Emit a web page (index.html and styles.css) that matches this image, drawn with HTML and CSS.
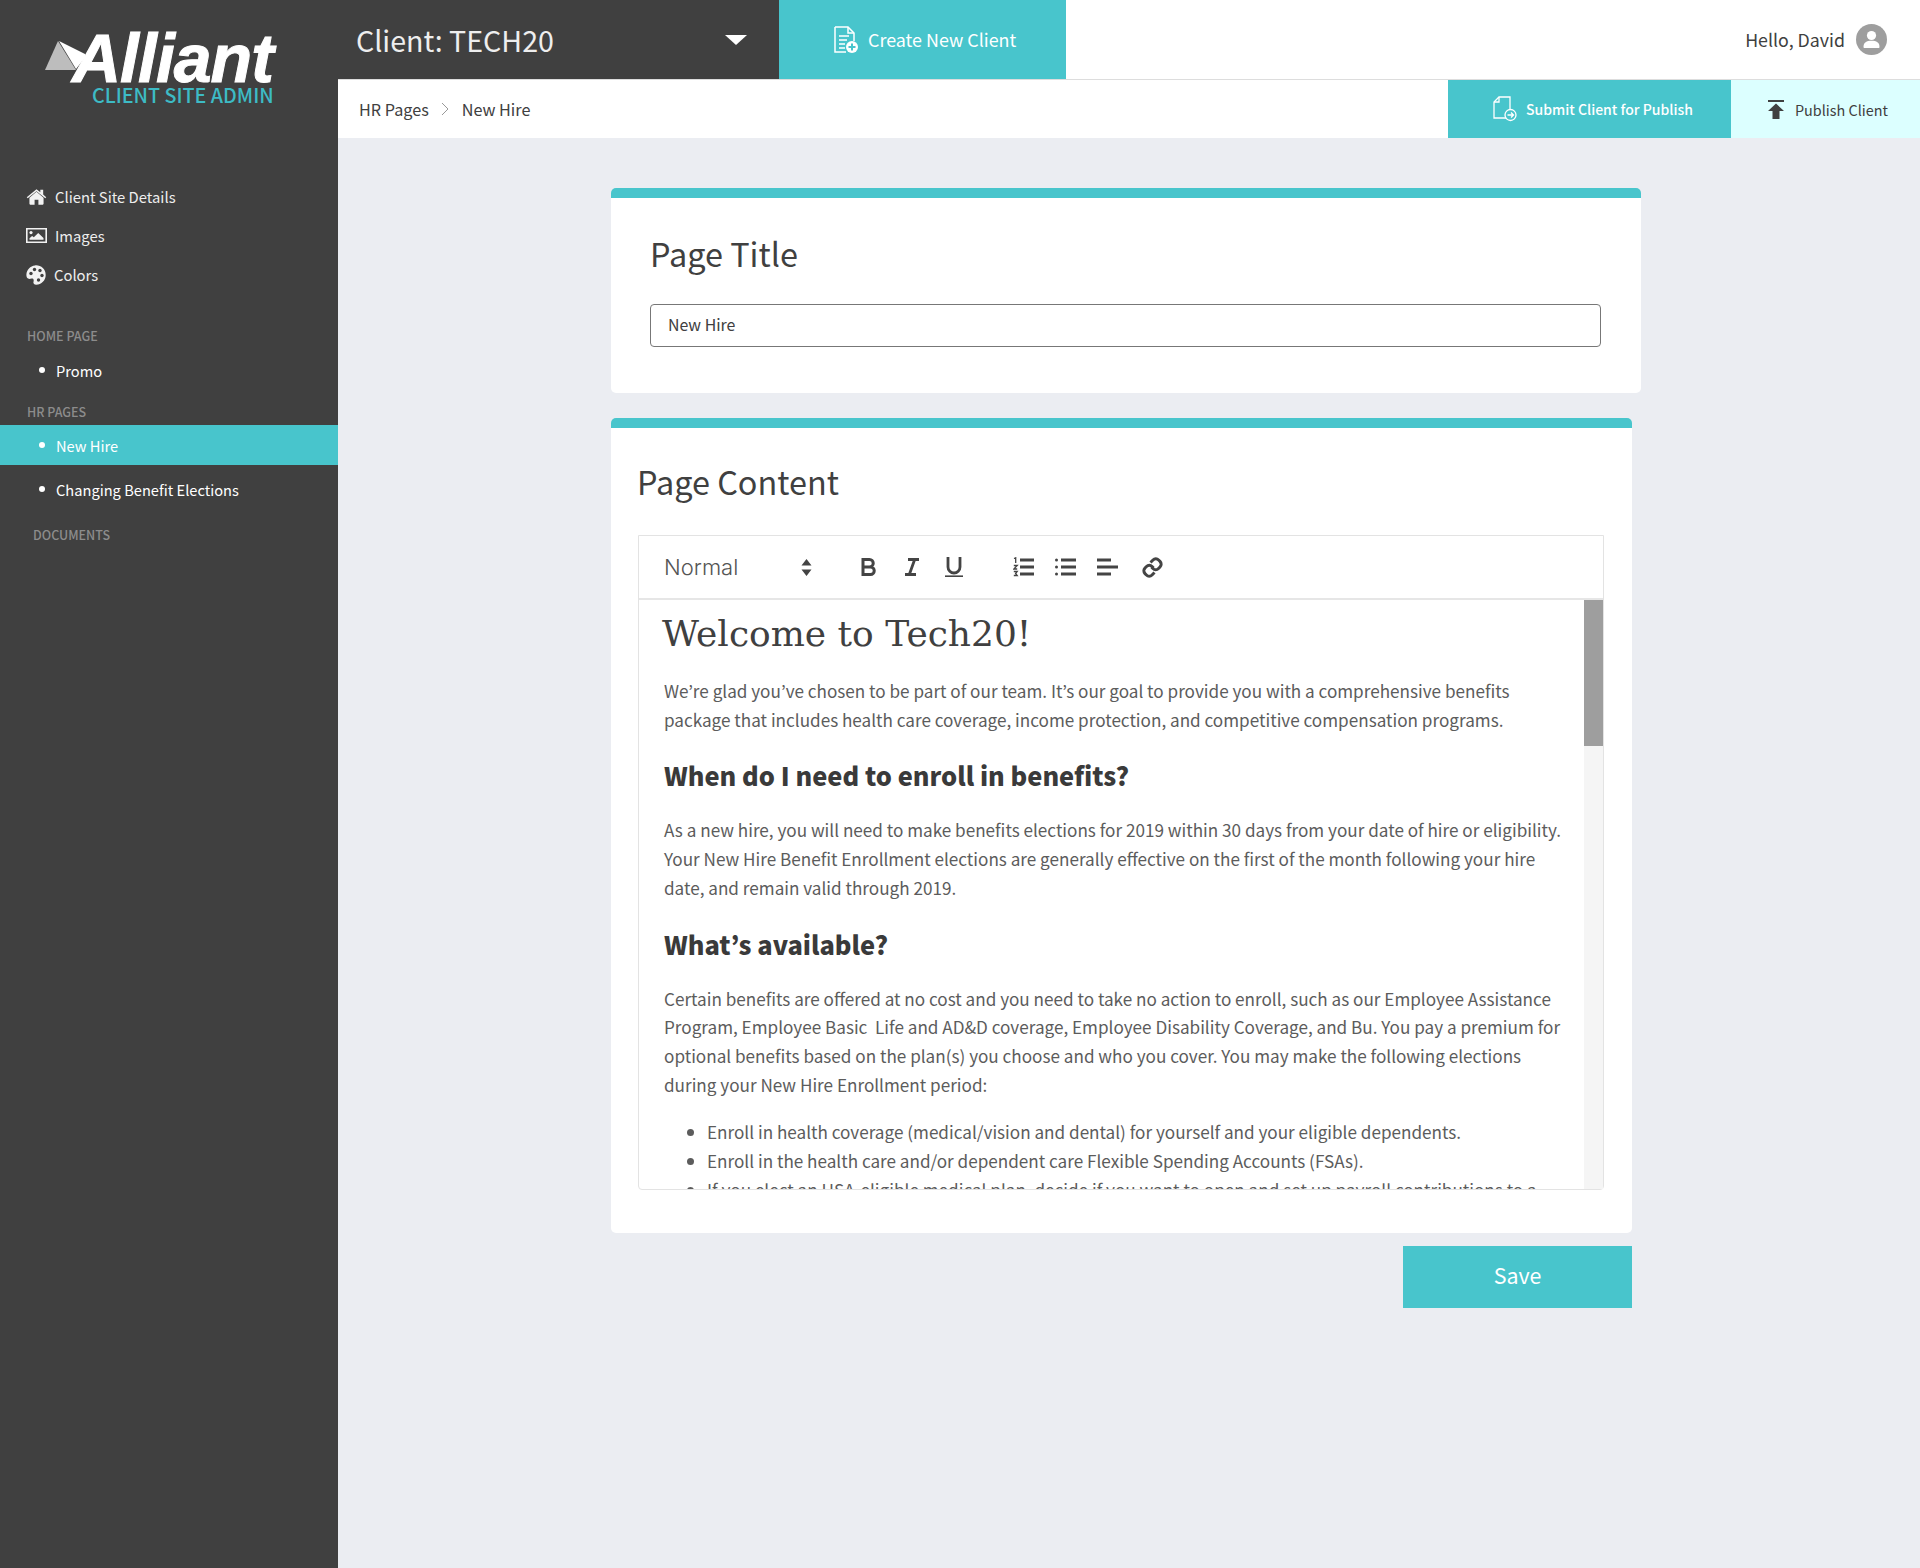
FILE: index.html
```html
<!DOCTYPE html>
<html lang="en">
<head>
<meta charset="utf-8">
<title>Client Site Admin</title>
<link rel="stylesheet" href="styles.css">
</head>
<body>
<div class="app">
  <aside class="sidebar">
    <div class="logo">
      <div class="logo-mark">
        <svg class="logo-tri" viewBox="0 0 40 40" width="40" height="40"><path d="M13 0 L0 29 L31 29 Z" fill="#bdbdbd"/><path d="M14 0 L42 14 L31 28 Z" fill="#fff"/></svg>
        <span class="logo-word">Alliant</span>
      </div>
      <div class="logo-sub">CLIENT SITE ADMIN</div>
    </div>
    <nav class="nav-main">
      <a class="nav-item">
        <svg viewBox="0 0 22 18" width="21" height="18"><path d="M11 3.6 3.6 9.8V16.2a.8.8 0 0 0 .8.8H9v-5h4v5h4.6a.8.8 0 0 0 .8-.8V9.8Z" fill="#f2f2f2"/><path d="M.8 9.2 11 .9l4 3.2V1.5h3v5l3.2 2.7-1 1.2L11 2.9 1.8 10.4Z" fill="#f2f2f2"/></svg>
        <span>Client Site Details</span></a>
      <a class="nav-item">
        <svg viewBox="0 0 21 16" width="21" height="16"><path fill-rule="evenodd" d="M0 0h21v15H0Zm1.6 1.6v11.8h17.8V1.6Z" fill="#f2f2f2"/><circle cx="5" cy="4.6" r="1.6" fill="#f2f2f2"/><path d="M3.5 11.8v-1.5l2.6-2.4 1.7 1.4 4.4-4.3 5.3 5.1v1.7Z" fill="#f2f2f2"/></svg>
        <span>Images</span></a>
      <a class="nav-item">
        <svg viewBox="0 0 20 20" width="20" height="20"><path fill-rule="evenodd" d="M9 .4C14.600-.2 19.700 3.900 19.700 10c0 5.400-4.300 9.700-9.500 9.700-2.300 0-3.100-1.500-2.700-3 .4-1.400.3-2.700-1-3.100-1.500-.5-2.600.6-3.800.2C.9 13.200.3 11.500.4 9.500.7 4.700 4.300.9 9 .4Z" fill="#f2f2f2"/><circle cx="5" cy="8.500" r="1.700" fill="#404040"/><circle cx="8.500" cy="4.500" r="1.700" fill="#404040"/><circle cx="14" cy="5.500" r="1.700" fill="#404040"/><circle cx="16" cy="10.500" r="1.700" fill="#404040"/><circle cx="12.500" cy="15" r="1.700" fill="#404040"/></svg>
        <span>Colors</span></a>
    </nav>
    <div class="nav-head first">HOME PAGE</div>
    <a class="nav-sub promo">Promo</a>
    <div class="nav-head second">HR PAGES</div>
    <a class="nav-sub active">New Hire</a>
    <a class="nav-sub changing">Changing Benefit Elections</a>
    <div class="nav-head docs">DOCUMENTS</div>
  </aside>
  <div class="main">
    <header class="topbar">
      <div class="client-select">
        <span class="client-name">Client: TECH20</span>
        <span class="caret"></span>
      </div>
      <a class="create-btn">
        <svg viewBox="0 0 24 28" width="24" height="28"><path d="M1 1h13l6 6v8M1 1v25h11" fill="none" stroke="#fff" stroke-width="1.500"/><path d="M14 1v6h6M5 10h10M5 14h8M5 18h6M5 22h6" fill="none" stroke="#fff" stroke-width="1.500"/><circle cx="18" cy="21" r="6" fill="#fff"/><path d="M18 17.500v7M14.500 21h7" stroke="#48c5cc" stroke-width="2"/></svg>
        <span class="create-label">Create New Client</span></a>
      <div class="user">
        <span>Hello, David</span>
        <span class="avatar"><svg viewBox="0 0 31 31" width="31" height="31"><circle cx="15.500" cy="11.500" r="4.600" fill="#fff"/><path d="M7.500 23c0-4.500 3-6.200 8-6.200s8 1.700 8 6.200c0 .6-.5 1-1 1h-14c-.5 0-1-.4-1-1Z" fill="#fff"/></svg></span>
      </div>
    </header>
    <div class="subbar">
      <div class="crumbs">
        <span>HR Pages</span>
        <svg viewBox="0 0 8 14" width="8" height="14"><path d="M1 1l6 6-6 6" fill="none" stroke="#999" stroke-width="1"/></svg>
        <span>New Hire</span>
      </div>
      <a class="submit-btn">
        <svg viewBox="0 0 24 26" width="24" height="26"><path d="M13 22H1V6l5-5h11v12" fill="none" stroke="#fff" stroke-width="1.300"/><path d="M1 6h5V1" fill="none" stroke="#fff" stroke-width="1.300"/><circle cx="17.500" cy="19" r="5.500" fill="none" stroke="#fff" stroke-width="1.300"/><path d="M14.500 19h6M18 16.500l2.500 2.500-2.500 2.500" fill="none" stroke="#fff" stroke-width="1.300"/></svg>
        <span>Submit Client for Publish</span></a>
      <a class="publish-btn">
        <svg viewBox="0 0 16 19" width="16" height="19"><path d="M0 0h16v2H0ZM8 3.500 16 11h-4.500v8h-7v-8H0Z" fill="#404040"/></svg>
        <span>Publish Client</span></a>
    </div>
    <main class="content">
      <section class="card card-title">
        <h2 class="card-heading">Page Title</h2>
        <input class="title-input" type="text" value="New Hire">
      </section>
      <section class="card card-content">
        <h2 class="card-heading">Page Content</h2>
        <div class="editor">
          <div class="toolbar">
            <span class="format">Normal</span>
            <svg class="tool-updown" viewBox="0 0 11 17" width="11" height="17"><path d="M5.500 0 10.500 6.500H.5ZM5.500 17 .5 10.500h10Z" fill="#444"/></svg>
            <svg class="tool bold" viewBox="0 0 16 18" width="16" height="18"><path d="M2 1.500h6.500a3.700 3.700 0 0 1 0 7.500H2Zm0 7.500h7.500a3.700 3.700 0 0 1 0 7.500H2Z" fill="none" stroke="#444" stroke-width="3"/></svg>
            <svg class="tool italic" viewBox="0 0 16 18" width="16" height="18"><path d="M4 1.500h11M1 16.500h11M10.500 2 5.500 16" fill="none" stroke="#444" stroke-width="2.800"/></svg>
            <svg class="tool underline" viewBox="0 0 18 20" width="18" height="20"><path d="M3 0v10a6 6 0 0 0 12 0V0" fill="none" stroke="#444" stroke-width="2.800"/><path d="M0 19.200h18" stroke="#444" stroke-width="1.600"/></svg>
            <svg class="tool ol" viewBox="0 0 21 20" width="21" height="20"><path d="M7 3h14M7 10h14M7 17h14" stroke="#444" stroke-width="2.800"/><path d="M1 1.500 2.700.8V6M.8 8.500h3.400L.8 12h3.400M.8 14.500h3.400l-1.600 2 1.600 2H.8" fill="none" stroke="#444" stroke-width="1.300"/></svg>
            <svg class="tool ul" viewBox="0 0 21 20" width="21" height="20"><path d="M6 3h15M6 10h15M6 17h15" stroke="#444" stroke-width="2.800"/><circle cx="1.500" cy="3" r="1.500" fill="#444"/><circle cx="1.500" cy="10" r="1.500" fill="#444"/><circle cx="1.500" cy="17" r="1.500" fill="#444"/></svg>
            <svg class="tool align" viewBox="0 0 21 20" width="21" height="20"><path d="M0 3h14M0 10h21M0 17h14" stroke="#444" stroke-width="2.800"/></svg>
            <svg class="tool link" viewBox="0 0 21 21" width="21" height="21"><path d="M8.500 5.500 11 3a4 4 0 0 1 5.600 0l1.400 1.400a4 4 0 0 1 0 5.600l-1.500 1.500a4 4 0 0 1-5.600 0L9.500 10" fill="none" stroke="#444" stroke-width="3"/><path d="M12.500 15.500 10 18a4 4 0 0 1-5.600 0L3 16.600A4 4 0 0 1 3 11l1.500-1.500a4 4 0 0 1 5.600 0l1.400 1.500" fill="none" stroke="#444" stroke-width="3"/></svg>
          </div>
          <div class="editor-body">
            <div class="doc">
              <h1 class="doc-title">Welcome to Tech20!</h1>
              <p>We’re glad you’ve chosen to be part of our team. It’s our goal to provide you with a comprehensive benefits package that includes health care coverage, income protection, and competitive compensation programs.</p>
              <h2>When do I need to enroll in benefits?</h2>
              <p>As a new hire, you will need to make benefits elections for 2019 within 30 days from your date of hire or eligibility. Your New Hire Benefit Enrollment elections are generally effective on the first of the month following your hire date, and remain valid through 2019.</p>
              <h2>What’s available?</h2>
              <p>Certain benefits are offered at no cost and you need to take no action to enroll, such as our Employee Assistance Program, Employee Basic&nbsp; Life and AD&amp;D coverage, Employee Disability Coverage, and Bu. You pay a premium for optional benefits based on the plan(s) you choose and who you cover. You may make the following elections during your New Hire Enrollment period:</p>
              <ul>
                <li>Enroll in health coverage (medical/vision and dental) for yourself and your eligible dependents.</li>
                <li>Enroll in the health care and/or dependent care Flexible Spending Accounts (FSAs).</li>
                <li>If you elect an HSA-eligible medical plan, decide if you want to open and set up payroll contributions to a</li>
              </ul>
            </div>
            <div class="scrollbar"><div class="thumb"></div></div>
          </div>
        </div>
      </section>
      <a class="save-btn">Save</a>
    </main>
  </div>
</div>
</body>
</html>
```

FILE: styles.css
```css
* { box-sizing: border-box; }
html, body { margin: 0; height: 100%; }
body {
  font-family: "Noto Sans CJK JP", "Open Sans", sans-serif;
  color: #404040;
  background: #ebedf2;
}
.app { display: flex; min-height: 1568px; }

/* Sidebar */
.sidebar { width: 338px; flex: none; background: #404040; }
.logo { height: 177px; padding: 30px 0 0 45px; }
.logo-mark { display: flex; align-items: flex-start; height: 56px; }
.logo-tri { flex: none; margin-top: 11px; }
.logo-word {
  font-family: "Liberation Sans", sans-serif;
  font-weight: 700;
  font-style: italic;
  font-size: 68px;
  line-height: 56px;
  letter-spacing: -1px;
  color: #fff;
  margin-left: -13px;
  -webkit-text-stroke: 1px #fff;
}
.logo-sub {
  margin: -3px 0 0 47px;
  font-size: 19.700px;
  line-height: 24px;
  font-weight: 500;
  color: #3dbbc5;
}
.nav-main { display: flex; flex-direction: column; padding-left: 26px; }
.nav-item {
  display: flex; align-items: center; gap: 8px;
  font-size: 14.800px; line-height: 20px; color: #eee;
  height: 39px;
}
.nav-item svg { flex: none; }
.nav-head { font-size: 12.500px; line-height: 18px; font-weight: 500; color: #8c8c8c; }
.nav-head.first { margin: 33px 0 0 27px; }
.nav-head.second { margin: 13px 0 0 27px; }
.nav-head.docs { margin: 17px 0 0 33px; }
.nav-sub {
  display: flex; align-items: center;
  height: 40px; padding-left: 39px;
  font-size: 14.650px; color: #fff;
}
.nav-sub::before {
  content: ""; width: 6px; height: 6px; border-radius: 50%;
  background: #fff; margin-right: 11px; flex: none;
}
.nav-sub.promo { margin-top: 5px; }
.nav-sub.active { background: #48c5cc; margin-top: 4px; }
.nav-sub.changing { margin-top: 4px; }

/* Top */
.main { flex: 1; min-width: 0; display: flex; flex-direction: column; }
.topbar { display: flex; height: 80px; background: #fff; border-bottom: 1px solid #ddd; }
.client-select {
  width: 441px; height: 79px; background: #404040; color: #eee;
  display: flex; align-items: center; justify-content: space-between;
  padding: 0 32px 0 18px;
}
.client-name { font-size: 28.600px; line-height: 40px; }
.caret {
  width: 0; height: 0;
  border-left: 11px solid transparent; border-right: 11px solid transparent;
  border-top: 10px solid #fff;
}
.create-btn {
  width: 287px; height: 79px; background: #48c5cc; color: #fff;
  display: flex; align-items: center; padding-left: 55px; gap: 11px;
  font-size: 17.900px;
}
.create-label { margin: -2px 0 0 -1px; }
.user {
  margin-left: auto; display: flex; align-items: center; gap: 11px;
  padding-right: 33px; font-size: 17.800px; color: #404040;
}
.user > span:first-child { margin-top: -1px; }
.avatar { width: 31px; height: 31px; border-radius: 50%; background: #9e9e9e; display: block; }
.avatar svg { display: block; }
.subbar { display: flex; height: 58px; background: #fff; }
.crumbs { display: flex; align-items: center; gap: 12px; padding-left: 21px; font-size: 16.200px; margin-right: auto; }
.crumbs svg { margin-right: 1px; }
.crumbs span { margin-top: -1px; }
.submit-btn {
  width: 283px; background: #48c5cc; color: #fff;
  display: flex; align-items: center; gap: 9px; padding-left: 45px;
  font-size: 14px; font-weight: 500;
}
.publish-btn {
  width: 189px; background: #dcffff; color: #404040;
  display: flex; align-items: center; gap: 11px; padding-left: 37px;
  font-size: 14.400px;
}

/* Content */
.content { display: flex; flex-direction: column; align-items: flex-start; padding: 50px 0 0 273px; }
.card { background: #fff; border-top: 10px solid #48c5cc; border-radius: 5px; }
.card-title { width: 1030px; padding: 34px 39px 46px; margin-bottom: 25px; }
.card-content { width: 1021px; padding: 32px 28px 43px 27px; }
.card-content .card-heading { margin-left: -1px; }
.card-heading { margin: 0; font-size: 32.400px; line-height: 42px; padding-bottom: 2px; font-weight: 400; color: #404040; }
.title-input {
  display: block; width: 951px; height: 43px; margin-top: 28px;
  border: 1px solid #777; border-radius: 4px; padding: 0 17px 2px 17px;
  font: 400 15.900px/39px "Noto Sans CJK JP", sans-serif; color: #404040; background: #fff;
}

/* Editor */
.editor { margin-top: 31px; width: 966px; height: 655px; border: 1px solid #e3e3e3; border-radius: 0 0 4px 4px; display: flex; flex-direction: column; }
.toolbar { height: 64px; flex: none; border-bottom: 2px solid #e6e6e6; display: flex; align-items: center; padding-left: 25px; }
.format { width: 137px; font-family: Inter, sans-serif; font-weight: 300; font-size: 22px; color: #555; }
.tool-updown { margin-right: 49px; }
.tool { flex: none; }
.bold { margin-right: 27px; }
.italic { margin-right: 25px; }
.underline { margin-right: 50px; }
.ol { margin-right: 21px; }
.ul { margin-right: 21px; }
.align { margin-right: 24px; }

.editor-body { flex: 1; min-height: 0; display: flex; overflow: hidden; }
.doc { flex: 1; min-width: 0; overflow: hidden; padding: 11px 14px 0 25px; font-size: 17.140px; line-height: 28.700px; color: #5c5c5c; }
.doc-title { margin: 0 0 0 -2px; font-family: "DejaVu Serif", serif; font-weight: 400; font-size: 36px; line-height: 46px; color: #404040; }
.doc p { margin: 20px 0 0; }
.doc h2 { margin: 23px 0; font-size: 25.400px; line-height: 36px; font-weight: 900; color: #3a3a3a; }
.doc h2 + p { margin-top: 23px; }
.doc ul { margin: 19px 0 0; padding-left: 43px; }
.scrollbar { width: 19px; flex: none; background: #f5f5f5; }
.thumb { height: 146px; background: #9e9e9e; }

.save-btn {
  align-self: flex-start; margin: 13px 0 0 792px; padding-bottom: 5px;
  width: 229px; height: 62px; background: #48c5cc; color: #fff;
  display: flex; align-items: center; justify-content: center; font-size: 21.400px;
}
```
